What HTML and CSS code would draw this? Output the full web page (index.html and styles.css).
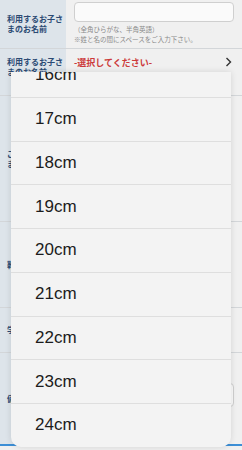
FILE: index.html
```html
<!DOCTYPE html>
<html lang="ja">
<head>
    <meta charset="UTF-8">
    <meta name="viewport" content="width=device-width, initial-scale=1.0">
    <title>お子さま情報</title>
    <link rel="stylesheet" href="styles.css">
</head>
<body>
    <div class="form">
        <div class="row row-name">
            <div class="label">利用するお子さまのお名前</div>
            <div class="field">
                <div class="input"></div>
                <p class="note">（全角ひらがな、半角英語）</p>
                <p class="note">※姓と名の間にスペースをご入力下さい。</p>
            </div>
        </div>
        <div class="row row-select">
            <div class="label">利用するお子さまのお名前</div>
            <div class="field">
                <div class="select">
                    <span class="select-text">-選択してください-</span>
                    <svg class="chevron" width="7" height="10" viewBox="0 0 7 10"><path d="M1.5 1 L5.5 5 L1.5 9" fill="none" stroke="#333" stroke-width="1.4"/></svg>
                </div>
            </div>
        </div>
        <div class="row row-tall">
            <div class="label">ご利用のお子さまの性別</div>
            <div class="field"></div>
        </div>
        <div class="row row-mid">
            <div class="label">靴のサイズ</div>
            <div class="field"></div>
        </div>
        <div class="row row-short">
            <div class="label">学年</div>
            <div class="field"></div>
        </div>
        <div class="row row-input">
            <div class="label">備考</div>
            <div class="field">
                <div class="input"></div>
            </div>
        </div>
        <div class="row row-last"></div>
    </div>

    <div class="picker">
        <ul class="picker-list">
            <li>16cm</li>
            <li>17cm</li>
            <li>18cm</li>
            <li>19cm</li>
            <li>20cm</li>
            <li>21cm</li>
            <li>22cm</li>
            <li>23cm</li>
            <li>24cm</li>
        </ul>
    </div>
</body>
</html>
```

FILE: styles.css
```css
body {
    margin: 0;
    background-color: #f0f0f0;
    font-family: "Noto Sans CJK JP", "Liberation Sans", sans-serif;
    overflow: hidden;
}

.form {
    display: flex;
    flex-direction: column;
}

.row {
    display: grid;
    grid-template-columns: 66px 1fr;
    border-bottom: 1px solid #d3d6d9;
    box-sizing: border-box;
}

.label {
    background-color: #dde4ea;
    color: #2b4a73;
    font-size: 8px;
    font-weight: bold;
    line-height: 10px;
    padding: 0 1px 0 7px;
    display: flex;
    align-items: center;
}

.field {
    padding: 0 8px 0 8px;
}

.row-name {
    height: 49px;
}

.row-name .field {
    padding-top: 2px;
}

.input {
    height: 20px;
    border: 1px solid #cfcfcf;
    border-radius: 4px;
    background-color: #fafafa;
    box-sizing: border-box;
}

.note {
    margin: 0;
    font-size: 6.5px;
    line-height: 10px;
    color: #8a8a8a;
}

.note:first-of-type {
    margin-top: 2px;
}

.row-select {
    height: 47px;
}

.row-select .label {
    align-items: flex-start;
    padding-top: 8px;
}

.select {
    display: flex;
    justify-content: space-between;
    align-items: center;
    height: 26px;
    padding-right: 2px;
}

.select-text {
    color: #cc3b3b;
    font-size: 9px;
    font-weight: bold;
}

.row-tall {
    height: 126px;
}

.row-mid {
    height: 86px;
}

.row-short {
    height: 45px;
}

.row-input {
    height: 93px;
}

.row-input .field {
    padding-top: 30px;
}

.row-input .input {
    height: 24px;
}

.row-last {
    height: 4px;
    border-top: 2px solid #3d8fd6;
    border-bottom: none;
    margin-top: -2px;
}

.picker {
    position: absolute;
    top: 72px;
    left: 11px;
    width: 220px;
    height: 375px;
    overflow: hidden;
    background-color: #f3f3f3;
    border-radius: 0 0 10px 10px;
    box-shadow: 0 0 6px rgba(0, 0, 0, 0.12);
}

.picker-list {
    list-style: none;
    margin: -18px 0 0 0;
    padding: 0;
}

.picker-list li {
    height: 43.75px;
    box-sizing: border-box;
    border-bottom: 1px solid #dedede;
    padding-left: 24px;
    display: flex;
    align-items: center;
    font-family: "Liberation Sans", Arial, sans-serif;
    font-size: 17px;
    color: #1c1c1c;
}
```
